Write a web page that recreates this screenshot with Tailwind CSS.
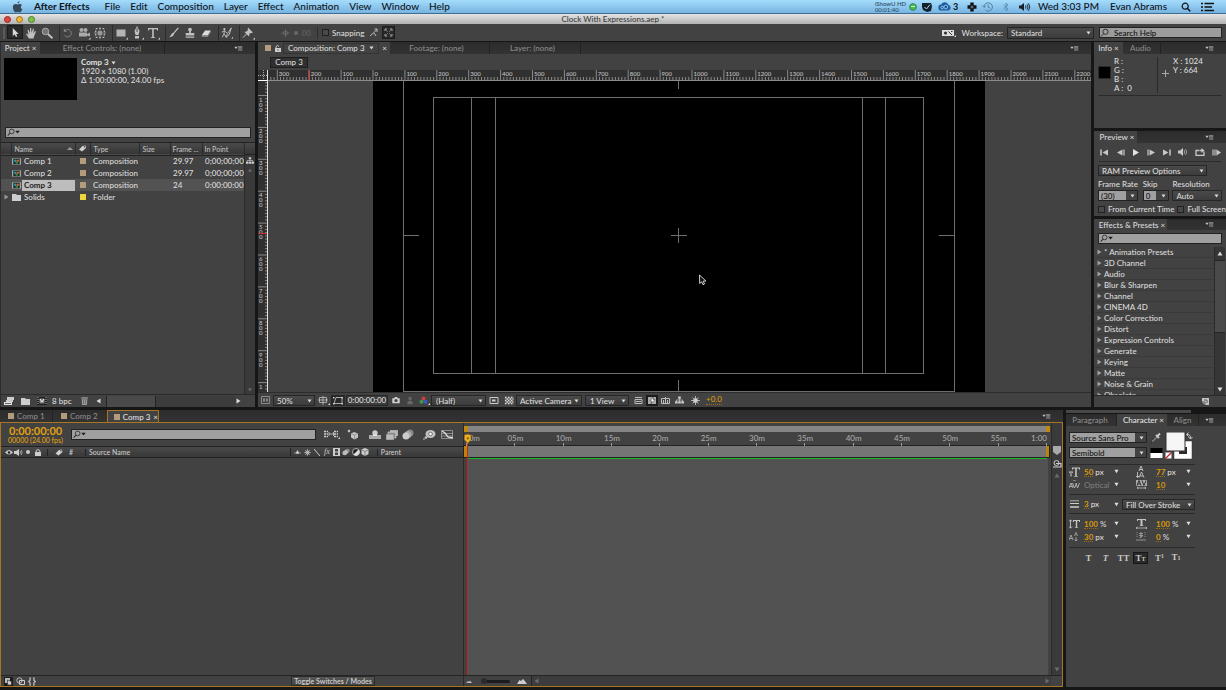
<!DOCTYPE html>
<html lang="en">
<head>
    <meta charset="UTF-8">
    <meta name="viewport" content="width=device-width, initial-scale=1.0">
    <title>After Effects - Clock With Expressions.aep</title>
    <script src="https://cdn.jsdelivr.net/npm/@tailwindcss/browser@4"></script>
</head>
<body class="h-screen flex flex-col overflow-hidden bg-[#161616] font-['Lato','Open_Sans',sans-serif] text-[8px] leading-[10px] text-[#dcdcdc] font-medium">

    <!-- shared icons -->
    <svg class="hidden">
        <symbol id="panelMenu" viewBox="0 0 10 6"><path d="M0 1h4l-2 2.500z" fill="#c4c4c4"/><path d="M4.500 .5h5M4.500 2h5M4.500 3.500h5M4.500 5h5" stroke="#b0b0b0" stroke-width=".8"/></symbol>
        <symbol id="down" viewBox="0 0 6 5"><path d="M.5.5h5L3 4.500z" fill="currentColor"/></symbol>
        <symbol id="right" viewBox="0 0 5 6"><path d="M.5.500v5L4.500 3z" fill="currentColor"/></symbol>
        <symbol id="lens" viewBox="0 0 16 10"><circle cx="6" cy="3.800" r="2.600" fill="none" stroke="#333"/><path d="M4.200 5.700 1.500 8.500" stroke="#333" stroke-width="1.200"/><path d="M10 3h5l-2.500 3z" fill="#1c1c1c"/></symbol>
        <symbol id="compIcon" viewBox="0 0 10 7"><path d="M0 0h10v7H0z" fill="#a4a4a4"/><path d="M1.500.5h7v6h-7z" fill="#162424"/><circle cx="3.700" cy="2.700" r="1.500" fill="#2a9aa0"/><circle cx="6.500" cy="2.800" r="1.400" fill="#c5612b"/><path d="M4 4h2.500v2H4z" fill="#3c8f3c"/></symbol>
        <symbol id="tag" viewBox="0 0 10 8"><path d="M1 5 5 1.200 8.500.5 9 3.500 4.500 7.500z" fill="#d0d0d0"/><circle cx="7.300" cy="2" r=".8" fill="#333"/></symbol>
        <symbol id="flow" viewBox="0 0 10 8"><path d="M3.500 0h3v2.500h-3zM0 5.500h3V8H0zM3.500 5.500h3V8h-3zM7 5.500h3V8H7z" fill="#ccc"/><path d="M5 2v4M1.500 6V4h7v2" fill="none" stroke="#ccc" stroke-width=".8"/></symbol>
        <symbol id="dot" viewBox="0 0 4 4"><circle cx="2" cy="2" r="2" fill="currentColor"/></symbol>
    </svg>

    <!-- system menu bar -->
    <nav class="h-[14px] shrink-0 flex items-center bg-linear-to-b from-[#a4dcfb] to-[#78b4e2] border-b border-[#3f6d92] text-[10px] leading-[13px] text-[#101418]">
        <svg class="ml-[12px] w-[11px] h-[12px]" viewBox="0 0 11 12"><path d="M7.600.3c.1 1.200-.9 2.300-2.100 2.300C5.400 1.500 6.400.400 7.600.300zM9.900 8.900c-.6 1.400-1.300 2.500-2.300 2.500-.7 0-1-.4-1.900-.4s-1.200.4-1.900.4C2.500 11.400.9 8.700.9 6.300.900 4.100 2.300 3 3.700 3c.9 0 1.500.5 2.100.5.600 0 1.300-.6 2.300-.6.8 0 1.500.4 1.900 1.100-1.800 1-1.500 3.800.6 4.400z" fill="#36495a"/></svg>
        <div class="ml-[11px] flex gap-[10px]">
            <a href="#" class="font-bold mr-[5px]">After Effects</a>
            <a href="#">File</a>
            <a href="#">Edit</a>
            <a href="#">Composition</a>
            <a href="#">Layer</a>
            <a href="#">Effect</a>
            <a href="#">Animation</a>
            <a href="#">View</a>
            <a href="#">Window</a>
            <a href="#">Help</a>
        </div>
        <div class="ml-auto mr-[12px] flex items-center">
            <div class="w-[34px] text-[6px] leading-[6px] whitespace-nowrap text-[#2c4a63]">iShowU HD<br>00:01:40</div>
            <svg class="w-[8px] h-[8px]" viewBox="0 0 8 8"><circle cx="4" cy="4" r="3.300" fill="#3fc34a" stroke="#3a7a58"/><path d="M2 3h4v1H2z" fill="#c8f5c8"/></svg>
            <svg class="ml-[4px] w-[12px] h-[10px]" viewBox="0 0 12 10"><path d="M1 1h9l1 3-1 5-4 1-4-2-1-3z" fill="#15202a"/><path d="m3.500 5 2 2L9 2.500" stroke="#a8d4f2" fill="none"/></svg>
            <svg class="ml-[5px] w-[13px] h-[9px]" viewBox="0 0 13 9"><path d="M3.500 8.500a3 3 0 0 1-.3-6A4 4 0 0 1 10.500 3a2.800 2.800 0 0 1-.5 5.500z" fill="#1f5d9e"/><circle cx="4.200" cy="5.500" r="1.300" stroke="#a9d7f7" stroke-width=".8" fill="none"/><circle cx="7.800" cy="5" r="1.900" stroke="#a9d7f7" stroke-width=".8" fill="none"/></svg>
            <span class="ml-[2px] w-[14px] text-[9px] font-bold">3</span>
            <svg class="w-[10px] h-[10px]" viewBox="0 0 10 10"><path d="M3.300.5h3.400v2.800h2.800v3.400H6.700v2.800H3.300V6.700H.5V3.300h2.800z" fill="#111"/><path d="M5 3.500v3M3.500 5h3" stroke="#7fb5e0" stroke-width=".7"/></svg>
            <svg class="ml-[5px] w-[12px] h-[10px]" viewBox="0 0 12 10"><path d="M2 5a4.200 4.200 0 1 1 1.500 3.200M.5 3.500 2 5.500l1.800-1.500M6.200 2.500V5.200l2 1" fill="none" stroke="#56809f"/></svg>
            <svg class="ml-[8px] w-[8px] h-[10px]" viewBox="0 0 8 10"><path d="m1.500 3 4.500 4-2 2V1l2 2-4.500 4" fill="none" stroke="#5a88ac" stroke-width=".8"/></svg>
            <svg class="ml-[8px] w-[13px] h-[10px]" viewBox="0 0 13 10"><path d="M1 3.500h2L6 1v8L3 6.500H1z" fill="#15202a"/><path d="M7.500 3.500q1 1.500 0 3M9 2.300q2 2.700 0 5.400M10.500 1.200q2.500 3.800 0 7.600" fill="none" stroke="#15202a" stroke-width=".9"/></svg>
            <span class="ml-[7px] whitespace-nowrap">Wed 3:03 PM</span>
            <span class="ml-[11px] whitespace-nowrap">Evan Abrams</span>
            <svg class="ml-[14px] w-[10px] h-[10px]" viewBox="0 0 10 10"><circle cx="4.200" cy="4.200" r="3" fill="none" stroke="#111" stroke-width="1.200"/><path d="m6.300 6.300 2.900 3" stroke="#111" stroke-width="1.500"/></svg>
            <svg class="ml-[10px] w-[13px] h-[10px]" viewBox="0 0 13 10"><path d="M3.500 1.500H13M3.500 5H11M3.500 8.500H13" stroke="#111" stroke-width="1.600"/><path d="M0 1.500h2M0 5h2M0 8.500h2" stroke="#111" stroke-width="1.600"/></svg>
        </div>
    </nav>

    <!-- window title -->
    <header class="h-[10px] shrink-0 grid grid-cols-3 items-center bg-linear-to-b from-[#e4e4e4] to-[#b4b4b4] text-[#3c3c3c]">
        <div class="pl-[4px] flex gap-[5px]">
            <button aria-label="Close" class="size-[7px] rounded-full bg-[#e0443a] border border-[#8d2d27]"></button>
            <button aria-label="Minimise" class="size-[7px] rounded-full bg-[#f0b33c] border border-[#9a7324]"></button>
            <button aria-label="Zoom" class="size-[7px] rounded-full bg-[#7fbf4d] border border-[#4e7c2d]"></button>
        </div>
        <h1 class="text-center">Clock With Expressions.aep *</h1>
    </header>

    <!-- tool bar -->
    <div class="h-[17px] shrink-0 flex items-center bg-[#424242]">
        <div class="ml-[3px] w-[2px] h-[12px] bg-[#5a5a5a]"></div>
        <div class="ml-[2px] flex items-center gap-[4px] text-[#c0c0c0]">
            <div class="flex">
                <button aria-label="Selection" class="w-[16px] h-[14px] p-px flex justify-center bg-[#2a2a2a] border border-[#1c1c1c]"><svg class="size-[11px]" viewBox="0 0 12 12"><path d="M3 1v9l2-2 1.500 3 1.500-.8L6.600 7.500H9.500z" fill="#d8d8d8"/></svg></button>
                <button aria-label="Hand" class="size-[16px] p-[2px]"><svg viewBox="0 0 12 12"><path d="M4 11.500 1 7l1-.5L3.500 8 2.500 3l1-.3L5 6V1h1.200l.3 5L8 1.500l1 .3L8.300 6.500 10 4l1 .5-2 5-.5 2z" fill="currentColor"/></svg></button>
                <button aria-label="Zoom tool" class="size-[16px] p-[2px]"><svg viewBox="0 0 12 12"><circle cx="4.500" cy="4.500" r="3.300" fill="#777" stroke="#a8a8a8"/><path d="m7 7 4.500 4.300" stroke="currentColor" stroke-width="2"/></svg></button>
            </div>
            <div class="flex border-l border-[#2c2c2c]">
                <button aria-label="Rotate" class="size-[16px] p-[3px]"><svg viewBox="0 0 12 12"><path d="M3 2.500A4.500 4.500 0 1 1 2 9" fill="none" stroke="#8a8a8a"/><path d="M1 .5v4h4z" fill="#8a8a8a"/></svg></button>
                <button aria-label="Camera" class="size-[16px] p-[1px]"><svg viewBox="0 0 14 14"><circle cx="4.500" cy="4" r="2" fill="#aaa"/><circle cx="8.500" cy="4" r="2" fill="#aaa"/><path d="M2 6.500h8v4H2zM10 8l3-1.500v4L10 9.500z" fill="#aaa"/><path d="M11.500 13.500h2v-2z" fill="#ddd"/></svg></button>
                <button aria-label="Pan behind" class="size-[16px] p-[2px]"><svg viewBox="0 0 14 14"><circle cx="7" cy="7" r="3" fill="#999"/><path d="M2 2h10v10H2z" fill="none" stroke="#c0c0c0" stroke-width="1.500" stroke-dasharray="2 2"/><path d="M7 0v3M7 11v3M0 7h3M11 7h3" stroke="#999"/></svg></button>
            </div>
            <div class="flex border-l border-[#2c2c2c]">
                <button aria-label="Rectangle" class="size-[16px] p-[1px]"><svg viewBox="0 0 14 14"><path d="M2.500 3.500h9v7h-9z" fill="#b4b4b4"/><path d="M12 13.500h2v-2z" fill="#ddd"/></svg></button>
                <button aria-label="Pen" class="size-[16px] p-[1px]"><svg viewBox="0 0 14 14"><path d="M7 0 9.500 5 8.500 9h-3L4.500 5z" fill="currentColor"/><path d="M5 10h4v2.500H5z" fill="currentColor"/><path d="M7 2v4" stroke="#333" stroke-width=".8"/><path d="M12 13.500h2v-2z" fill="#ddd"/></svg></button>
                <button aria-label="Type" class="size-[16px] p-[1px]"><svg viewBox="0 0 14 14"><path d="M2 2h10v2.500h-.8l-.6-1.300H7.800V11l1.400.5v.6H4.800v-.6L6.200 11V3.200H3.400l-.6 1.300H2z" fill="currentColor"/><path d="M12 13.500h2v-2z" fill="#ddd"/></svg></button>
            </div>
            <div class="flex border-l border-[#2c2c2c]">
                <button aria-label="Brush" class="size-[16px] p-[2px]"><svg viewBox="0 0 14 14"><path d="M12 1 6 8" stroke="currentColor" stroke-width="1.600"/><path d="M6.500 7.500 5 7 3 10l-1.500 2L5 11l2-2z" fill="currentColor"/></svg></button>
                <button aria-label="Clone stamp" class="size-[16px] p-[2px]"><svg viewBox="0 0 14 14"><circle cx="7" cy="3" r="2.200" fill="currentColor"/><path d="M6 4h2v3h4v3H2V7h4zM2 11h10v1.500H2z" fill="currentColor"/></svg></button>
                <button aria-label="Eraser" class="size-[16px] p-[2px]"><svg viewBox="0 0 14 14"><path d="M6 4h6.500L9 9.500H2z" fill="#ddd"/><path d="M2 9.500h7v2H2zM9 9.500 12.500 4v2L9 11.500z" fill="#999"/></svg></button>
            </div>
            <div class="flex border-l border-[#2c2c2c]">
                <button aria-label="Roto brush" class="size-[16px] p-[2px]"><svg viewBox="0 0 14 14"><circle cx="4" cy="2.500" r="1.300" fill="currentColor"/><path d="m4 4-.5 4L1.500 12M3.800 8 6 12M1 6l3-1.500L7 7M12 1 7.500 8 6 12l3.500-3z" stroke="currentColor" fill="none" stroke-width="1.100"/><path d="M12 13.500h2v-2z" fill="#ddd"/></svg></button>
            </div>
            <div class="flex border-l border-[#2c2c2c]">
                <button aria-label="Puppet pin" class="size-[16px] p-[1px]"><svg viewBox="0 0 14 14"><path d="m7 1.500 5 5-1.500.5-2 .5-.5 3L3.500 6 6.500 5z" fill="currentColor"/><path d="M5.500 8 2 11.500" stroke="currentColor"/><path d="M12 13.500h2v-2z" fill="#ddd"/></svg></button>
            </div>
        </div>
        <div class="ml-[25px] flex items-center gap-[2px] text-[#686868]">
            <svg class="w-[9px] h-[8px]" viewBox="0 0 9 8"><path d="M4.500 0v8M.5 4h8" stroke="currentColor"/><path d="M2.500 2.500h4v3h-4z" fill="none" stroke="currentColor" stroke-width=".7"/></svg>
            <svg class="w-[8px] h-[8px]" viewBox="0 0 8 8"><circle cx="4" cy="4" r="2" fill="currentColor"/></svg>
            <svg class="w-[9px] h-[8px]" viewBox="0 0 9 8"><path d="M1 1v6M8 1v6M2.500 1l4 6M6.500 1l-4 6" stroke="currentColor" stroke-width=".8"/></svg>
            <span class="mx-[4px] w-px h-[12px] bg-[#2c2c2c]"></span>
        </div>
        <label class="flex items-center gap-[3px]">
            <input type="checkbox" class="appearance-none size-[7px] bg-[#484848] border border-[#202020]">
            Snapping
        </label>
        <svg class="ml-[5px] w-[9px] h-[9px]" viewBox="0 0 9 9"><path d="m1 8 4-3.500L8 1M5.500 1H8v3" fill="none" stroke="#bbb"/><path d="m5 5 2 3" stroke="#bbb"/></svg>
        <button aria-label="Snap bounds" class="ml-[4px] size-[13px] p-[1px] bg-[#2a2a2a] border border-[#1c1c1c]"><svg viewBox="0 0 9 9"><path d="M1 3V1h2M6 1h2v2M8 6v2H6M3 8H1V6M2.500 2.500l1 1M6.500 2.500l-1 1M2.500 6.500l1-1M6.500 6.500l-1-1" fill="none" stroke="#c4c4c4" stroke-width=".8"/></svg></button>

        <svg class="ml-auto w-[14px] h-[8px]" viewBox="0 0 14 8"><path d="M0 1h12v6H0z" fill="#ddd"/><circle cx="3.500" cy="4" r="1.600" fill="#333"/><path d="M6.500 2.500 10 6M9 2.500h1.500" stroke="#333"/><path d="M12 8h2V6z" fill="#ddd"/></svg>
        <label for="workspace" class="ml-[6px]">Workspace:</label>
        <div class="relative ml-[4px] w-[87px] h-[12px]">
            <select id="workspace" class="appearance-none block size-full pl-[3px] bg-linear-to-b from-[#4a4a4a] to-[#3c3c3c] border border-[#242424]"><option>Standard</option></select>
            <svg class="absolute right-[3px] top-[4px] w-[5px] h-[4px]"><use href="#down"/></svg>
        </div>
        <div class="relative ml-[5px] mr-[4px] w-[123px] h-[11px]">
            <input type="text" aria-label="Search help" value="Search Help" class="block size-full pl-[14px] bg-[#9c9c9c] border border-[#222] text-[#111]">
            <svg class="absolute left-px top-[1px] w-[9px] h-[10px]" viewBox="0 0 9 10"><circle cx="5.500" cy="3.800" r="2.600" fill="none" stroke="#333"/><path d="M3.700 5.700 1 8.500" stroke="#333"/></svg>
        </div>
    </div>

    <main class="flex-1 min-h-0 grid grid-rows-[365fr_277fr] gap-y-[3px] pt-px pb-[3px]">
        <div class="min-h-0 flex gap-[3px]">

            <!-- project panel -->
            <section class="w-[255px] shrink-0 flex flex-col bg-[#424242] border-l border-[#2c2c2c]">
                <div class="h-[12px] shrink-0 flex items-center bg-linear-to-b from-[#2c2c2c] to-[#333]">
                    <button class="h-full w-[39px] bg-[#424242]">Project ×</button>
                    <button class="h-full w-[125px] border-r border-[#222] text-[#8a8a8a]">Effect Controls: (none)</button>
                    <svg class="ml-auto mr-[12px] w-[9px] h-[5px]"><use href="#panelMenu"/></svg>
                </div>
                <div class="flex pt-[4px] pl-[3px] gap-[4px]">
                    <div class="w-[73px] h-[42px] bg-black"></div>
                    <div class="leading-[9px]">
                        <p class="flex items-center gap-[2px] font-bold text-[#e0e0e0]">Comp 3 <svg class="w-[5px] h-[4px]"><use href="#down"/></svg></p>
                        <p>1920 x 1080 (1.00)</p>
                        <p>Δ 1:00:00:00, 24.00 fps</p>
                    </div>
                </div>
                <div class="relative mt-[27px] mx-[4px] h-[11px]">
                    <input type="text" aria-label="Search project" class="block size-full pl-[16px] bg-[#a0a0a0] border border-[#222]">
                    <svg class="absolute left-[1px] top-[1px] w-[15px] h-[9px]"><use href="#lens"/></svg>
                </div>
                <div class="mt-[4px] flex-1 min-h-0 flex border-t border-[#222]">
                    <div class="flex-1 min-w-0 overflow-hidden">
                        <table class="w-full table-fixed border-collapse text-left whitespace-nowrap">
                            <colgroup><col class="w-[10px]"><col class="w-[64px]"><col class="w-[15px]"><col class="w-[49px]"><col class="w-[31px]"><col class="w-[32px]"><col></colgroup>
                            <thead>
                                <tr class="h-[12px] bg-linear-to-b from-[#4a4a4a] to-[#363636] border-b border-[#222] text-[7px] text-[#c0c0c0]">
                                    <th></th>
                                    <th class="font-medium border-l border-[#2a2a2a]"><span class="flex items-center justify-between pl-[3px] pr-[2px]">Name <svg class="w-[6px] h-[3px]" viewBox="0 0 6 3"><path d="M0 3h6L3 0z" fill="#999"/></svg></span></th>
                                    <th class="border-l border-[#2a2a2a]"><svg class="mx-auto w-[9px] h-[7px]"><use href="#tag"/></svg></th>
                                    <th class="font-medium pl-[3px] border-l border-[#2a2a2a]">Type</th>
                                    <th class="font-medium pl-[3px] border-l border-[#2a2a2a]">Size</th>
                                    <th class="font-medium pl-[2px] border-l border-[#2a2a2a]">Frame ...</th>
                                    <th class="font-medium pl-[2px] border-l border-[#2a2a2a]">In Point</th>
                                </tr>
                            </thead>
                            <tbody>
                                <tr class="h-[12px]">
                                    <td></td><td><span class="flex items-center gap-[3px] pl-px"><svg class="w-[9px] h-[7px]"><use href="#compIcon"/></svg>Comp 1</span></td>
                                    <td><div class="mx-auto size-[6px] bg-[#b39c7c]"></div></td><td class="pl-[3px]">Composition</td><td></td><td class="pl-[3px]">29.97</td><td class="pl-[3px]">0;00;00;00</td>
                                </tr>
                                <tr class="h-[12px]">
                                    <td></td><td><span class="flex items-center gap-[3px] pl-px"><svg class="w-[9px] h-[7px]"><use href="#compIcon"/></svg>Comp 2</span></td>
                                    <td><div class="mx-auto size-[6px] bg-[#b39c7c]"></div></td><td class="pl-[3px]">Composition</td><td></td><td class="pl-[3px]">29.97</td><td class="pl-[3px]">0;00;00;00</td>
                                </tr>
                                <tr class="h-[12px] bg-[#525252]">
                                    <td></td><td><span class="flex items-center gap-px pl-px"><svg class="w-[9px] h-[7px]"><use href="#compIcon"/></svg><span class="flex-1 h-[11px] pl-[2px] bg-[#bdbdbd] text-[#222] font-bold">Comp 3</span></span></td>
                                    <td><div class="mx-auto size-[6px] bg-[#b39c7c]"></div></td><td class="pl-[3px]">Composition</td><td></td><td class="pl-[3px]">24</td><td class="pl-[3px]">0:00:00:00</td>
                                </tr>
                                <tr class="h-[12px]">
                                    <td><svg class="ml-[3px] w-[5px] h-[6px] text-[#999]"><use href="#right"/></svg></td><td><span class="flex items-center gap-[3px] pl-px"><svg class="w-[9px] h-[7px]" viewBox="0 0 9 7"><path d="M0 0h4l1 1h4v6H0z" fill="#ccc"/></svg>Solids</span></td>
                                    <td><div class="mx-auto size-[6px] bg-[#ecd43c]"></div></td><td class="pl-[3px]">Folder</td><td></td><td></td><td></td>
                                </tr>
                            </tbody>
                        </table>
                    </div>
                    <div class="w-[11px] flex flex-col items-center bg-[#3a3a3a] border-l border-[#2a2a2a] text-[#6c6c6c]">
                        <div class="w-full h-[12px] bg-linear-to-b from-[#4a4a4a] to-[#363636] border-b border-[#222]"></div>
                        <svg class="my-[2px] w-[8px] h-[7px]"><use href="#flow"/></svg>
                        <svg class="mt-[2px] w-[6px] h-[4px] rotate-180"><use href="#down"/></svg>
                        <svg class="mt-auto mb-[2px] w-[6px] h-[4px]"><use href="#down"/></svg>
                    </div>
                </div>
                <div class="h-[13px] shrink-0 flex items-center pl-[3px] border-t border-[#2a2a2a]">
                    <svg class="w-[10px] h-[9px]" viewBox="0 0 10 9"><path d="M3 0h7v3H3zM2 3h7v2H2z" fill="#ccc"/><path d="M0 5h8v3H0z" fill="#e0e0e0"/><path d="M1 6.500h6" stroke="#333" stroke-width=".7"/></svg>
                    <svg class="ml-[7px] w-[9px] h-[7px]" viewBox="0 0 9 7"><path d="M0 0h4l1 1h4v6H0z" fill="#ccc"/></svg>
                    <svg class="ml-[7px] w-[10px] h-[8px]" viewBox="0 0 10 8"><path d="M0 0h10v8H0z" fill="#1e1e1e"/><path d="M1 0v8M9 0v8" stroke="#bbb" stroke-dasharray="1 1"/><path d="M2.500 1.500h5v5h-5z" fill="#888"/><path d="m3 2 2 3 2-3" stroke="#eee" fill="none"/></svg>
                    <button class="ml-[5px]">8 bpc</button>
                    <svg class="ml-[10px] w-[7px] h-[8px]" viewBox="0 0 7 8"><path d="M0 1h7M2.500 0h2" stroke="#aaa"/><path d="M.7 2.200h5.600L6 8H1z" fill="#9a9a9a"/><path d="M2.500 3v4M4.500 3v4" stroke="#555" stroke-width=".6"/></svg>
                    <svg class="ml-[8px] w-[5px] h-[6px] rotate-180"><use href="#right"/></svg>
                    <div class="ml-[5px] w-[50px] h-[11px] bg-[#4a4a4a] border-x border-[#242424]"></div>
                    <div class="flex-1 h-[11px] bg-[#3c3c3c]"></div>
                    <svg class="mr-[14px] w-[5px] h-[6px]"><use href="#right"/></svg>
                </div>
            </section>

            <!-- composition viewer -->
            <section class="flex-1 min-w-0 flex flex-col bg-[#424242]">
                <div class="h-[12px] shrink-0 flex items-center bg-linear-to-b from-[#2c2c2c] to-[#333]">
                    <div class="h-full w-[132px] flex items-center pl-[7px] bg-[#424242]">
                        <span class="size-[6px] bg-[#b39c7c]"></span>
                        <svg class="ml-[4px] w-[6px] h-[7px]" viewBox="0 0 6 7"><path d="M0 3h6v4H0z" fill="#ccc"/><path d="M1 3V1.500Q2.500-.5 4 1.500" fill="none" stroke="#ccc"/><path d="M3 4.500v1" stroke="#333"/></svg>
                        <button class="ml-[2px] h-[11px] flex-1 px-[4px] flex items-center justify-between border border-[#333] whitespace-nowrap">Composition: Comp 3 <svg class="w-[5px] h-[4px]"><use href="#down"/></svg></button>
                        <span class="mx-[3px]">×</span>
                    </div>
                    <button class="h-full w-[100px] pr-[6px] border-r border-[#222] text-[#8a8a8a]">Footage: (none)</button>
                    <button class="h-full w-[91px] pr-[5px] border-r border-[#222] text-[#8a8a8a]">Layer: (none)</button>
                    <svg class="ml-auto mr-[12px] w-[9px] h-[5px]"><use href="#panelMenu"/></svg>
                </div>
                <div class="h-[16px] shrink-0 flex items-center pl-[12px]">
                    <button class="w-[38px] h-[11px] leading-[9px] bg-[#303030] border border-[#1e1e1e]">Comp 3</button>
                </div>
                <!-- 50% view, 100 px of the comp = 31.9 px -->
                <svg id="viewer" class="flex-1 min-h-0 w-full bg-[#424242]" font-size="6" fill="#c4c4c4">
                    <rect width="100%" height="10" fill="#303030"/>
                    <rect width="10" height="100%" fill="#303030"/>
                    <path d="M115 11h612v400H115z" fill="#000"/>
                    <g fill="none" stroke="#6e6e6e" shape-rendering="crispEdges">
                        <path d="M145.500 11v310.500h551V11"/>
                        <path d="M175.500 27.500h490v276h-490zM213.500 27v276M237.500 27v276M604.500 27v276M627.500 27v276"/>
                        <path d="M146 165.500h15M696 165.500h-15M420.500 11v8M420.500 321v-11M413 165.500h16M420.500 158v15"/>
                    </g>
                    <g id="ruler"></g>
                    <path d="M50.500 0v10M0 163.500h9" stroke="#d03030"/>
                    <path d="M0 0h10v10H0z" fill="#303030"/>
                    <path d="M5.500 0v10M0 5.500h10" stroke="#aaa" stroke-dasharray="1 1"/>
                    <line y1="10.500" x2="100%" y2="10.500" stroke="#8c8c8c"/>
                    <line y1="10.500" x2="10" y2="10.500" stroke="#fff"/>
                    <line x1="9.500" x2="9.500" y2="100%" stroke="#e4e4e4"/>
                    <path d="m441.500 205 .2 8.500 2-1.700 1.300 2.900 1.500-.7-1.300-2.800 2.700-.2z" fill="#111" stroke="#fff" stroke-width=".8"/>
                </svg>
                <div class="h-[15px] shrink-0 flex items-center gap-px pl-px border-t border-[#2c2c2c]">
                    <svg class="w-[13px] h-[9px]" viewBox="0 0 13 9"><path d="M2.500.5h8v7h-8z" fill="none" stroke="#888"/><path d="M4 2.500h2v3H4zM7 2.500h2v3H7z" fill="#888"/></svg>
                    <div class="relative w-[42px] h-[11px]">
                        <select aria-label="Zoom" class="appearance-none block size-full pl-[3px] bg-linear-to-b from-[#4a4a4a] to-[#3c3c3c] border border-[#262626]"><option>50%</option></select>
                        <svg class="absolute right-[3px] top-[4px] w-[5px] h-[4px]"><use href="#down"/></svg>
                    </div>
                    <svg class="w-[14px] h-[9px]" viewBox="0 0 14 9"><path d="M3.500 1.500h7v5h-7zM7 0v9M2 4h10" fill="none" stroke="#c4c4c4" stroke-width=".8"/><path d="M12 9h2V7z" fill="#ddd"/></svg>
                    <svg class="w-[14px] h-[11px] bg-[#282828]" viewBox="0 0 14 11"><path d="M3 8.500h8v-6H5z" fill="none" stroke="#ccc" stroke-width=".8"/><path d="M2 2h1.500v1.500H2zM10.500 8H12v1.500h-1.500zM2 8h1.500v1.500H2zM10.500 2H12v1.500h-1.500z" fill="#ccc"/></svg>
                    <button class="w-[42px] h-[11px] leading-[9px] bg-[#3c3c3c] border border-[#262626]">0:00:00:00</button>
                    <svg class="w-[14px] h-[9px]" viewBox="0 0 15 9"><path d="M3.500 2h2l1-1.200h2l1 1.200h2v5.500h-8z" fill="#ccc"/><circle cx="7.500" cy="4.500" r="1.700" fill="#444"/></svg>
                    <svg class="w-[12px] h-[9px]" viewBox="0 0 13 9"><circle cx="6.500" cy="2.200" r="1.800" fill="#686868"/><path d="M3.500 8.500q0-4 3-4t3 4z" fill="#686868"/></svg>
                    <svg class="w-[13px] h-[9px]" viewBox="0 0 13 9"><circle cx="6.500" cy="2.500" r="2" fill="#d03c3c"/><circle cx="4.500" cy="5.800" r="2" fill="#3b9a45"/><circle cx="8.500" cy="5.800" r="2" fill="#3a58c8"/><path d="M11 9h2V7z" fill="#ddd"/></svg>
                    <div class="relative w-[55px] h-[11px]">
                        <select aria-label="Resolution" class="appearance-none block size-full pl-[4px] bg-linear-to-b from-[#4a4a4a] to-[#3c3c3c] border border-[#262626]"><option>(Half)</option></select>
                        <svg class="absolute right-[3px] top-[4px] w-[5px] h-[4px]"><use href="#down"/></svg>
                    </div>
                    <svg class="w-[14px] h-[9px]" viewBox="0 0 14 9"><path d="M3 1.500h8v6H3z" fill="none" stroke="#ccc"/><path d="M5 3.500h3.500v2H5z" fill="#ccc"/></svg>
                    <svg class="w-[13px] h-[9px]" viewBox="0 0 13 9"><path d="M2.500.5h9v8h-9z" fill="#555"/><path d="M3 1.500h8M3 4.500h8M3 7.500h8" stroke="#ddd" stroke-width="1.500" stroke-dasharray="1.500 1.500"/><path d="M4.500 3h7M4.500 6h7" stroke="#ddd" stroke-width="1.500" stroke-dasharray="1.500 1.500"/></svg>
                    <div class="relative w-[66px] h-[11px]">
                        <select aria-label="Camera" class="appearance-none block size-full pl-[3px] bg-linear-to-b from-[#4a4a4a] to-[#3c3c3c] border border-[#262626]"><option>Active Camera</option></select>
                        <svg class="absolute right-[3px] top-[4px] w-[5px] h-[4px]"><use href="#down"/></svg>
                    </div>
                    <div class="relative ml-[2px] w-[44px] h-[11px]">
                        <select aria-label="Views" class="appearance-none block size-full pl-[4px] bg-linear-to-b from-[#4a4a4a] to-[#3c3c3c] border border-[#262626]"><option>1 View</option></select>
                        <svg class="absolute right-[3px] top-[4px] w-[5px] h-[4px]"><use href="#down"/></svg>
                    </div>
                    <svg class="ml-[2px] w-[13px] h-[9px]" viewBox="0 0 13 9"><path d="M3 1.500h7M3 3.500h7v4H3z" fill="none" stroke="#bbb"/><path d="M4 5h5v1H4z" fill="#bbb"/></svg>
                    <svg class="w-[12px] h-[11px] bg-[#1c1c1c]" viewBox="0 0 12 11"><path d="M2 2h8v7H2z" fill="#aaa"/><path d="m7 2-3 4h2l-1 3 4-4.500H7z" fill="#fff" stroke="#333" stroke-width=".5"/></svg>
                    <svg class="w-[13px] h-[9px]" viewBox="0 0 13 9"><path d="M2.500 2.500h8v5h-8z" fill="none" stroke="#bbb"/><path d="M4.500 4v3M6.500 1v6M8.500 4v3" stroke="#bbb"/></svg>
                    <svg class="mx-[2px] w-[9px] h-[8px]"><use href="#flow"/></svg>
                    <svg class="ml-[3px] w-[11px] h-[9px]" viewBox="0 0 11 9"><circle cx="5.500" cy="4.500" r="2.300" fill="#ddd"/><path d="M5.500 0v9M1 4.500h9M2.500 1.500l6 6M8.500 1.500l-6 6" stroke="#ccc" stroke-width=".8"/></svg>
                    <button class="ml-[4px] text-[#d8980c] border-b border-dotted border-[#a06c10] leading-[9px]">+0.0</button>
                </div>
            </section>

            <div class="w-[132px] shrink-0 flex flex-col gap-[3px]">
                <!-- info -->
                <section class="h-[86px] shrink-0 bg-[#424242]">
                    <div class="h-[12px] flex items-center bg-linear-to-b from-[#2c2c2c] to-[#333]">
                        <button class="h-full w-[29px] bg-[#424242]">Info ×</button>
                        <button class="h-full w-[38px] pr-[2px] border-r border-[#222] text-[#8a8a8a]">Audio</button>
                        <svg class="ml-auto mr-[12px] w-[9px] h-[5px]"><use href="#panelMenu"/></svg>
                    </div>
                    <div class="mx-[4px] pt-[3px] pb-[2px] flex border-b border-[#2a2a2a] leading-[9px]">
                        <div class="mt-[9px] size-[13px] bg-black border border-[#2a2a2a]"></div>
                        <div class="ml-[3px] w-[44px] border-r border-[#2a2a2a]">
                            <p>R :</p><p>G :</p><p>B :</p><p>A : &nbsp;0</p>
                        </div>
                        <svg class="mt-[13px] ml-[4px] w-[7px] h-[7px]" viewBox="0 0 7 7"><path d="M3.500 0v7M0 3.500h7" stroke="#aaa"/></svg>
                        <div class="ml-[4px]"><p>X : 1024</p><p>Y : 664</p></div>
                    </div>
                </section>

                <!-- preview -->
                <section class="h-[85px] shrink-0 bg-[#424242]">
                    <div class="h-[12px] flex items-center bg-linear-to-b from-[#2c2c2c] to-[#333]">
                        <button class="h-full w-[43px] pl-[3px] bg-[#424242]">Preview ×</button>
                        <svg class="ml-auto mr-[12px] w-[9px] h-[5px]"><use href="#panelMenu"/></svg>
                    </div>
                    <div class="mx-[5px] h-[19px] flex items-center justify-between pl-px border-b border-[#2c2c2c] text-[#c8c8c8]">
                        <button aria-label="First frame"><svg class="w-[9px] h-[7px]" viewBox="0 0 9 7"><path d="M1 .5v6" stroke="currentColor" stroke-width="1.500"/><path d="M8 .5v6L2.500 3.500z" fill="currentColor"/></svg></button>
                        <button aria-label="Previous frame"><svg class="w-[9px] h-[7px]" viewBox="0 0 9 7"><path d="M8 .5v6" stroke="currentColor" stroke-width="1.200"/><path d="M6.500.5v6L1 3.500z" fill="currentColor"/></svg></button>
                        <button aria-label="Play"><svg class="w-[8px] h-[7px]" viewBox="0 0 8 7"><path d="M1 0v7l6-3.500z" fill="#e0e0e0"/></svg></button>
                        <button aria-label="Next frame"><svg class="w-[9px] h-[7px]" viewBox="0 0 9 7"><path d="M1 .5v6" stroke="currentColor" stroke-width="1.200"/><path d="M2.500.5v6L8 3.500z" fill="currentColor"/></svg></button>
                        <button aria-label="Last frame"><svg class="w-[9px] h-[7px]" viewBox="0 0 9 7"><path d="M8 .5v6" stroke="currentColor" stroke-width="1.500"/><path d="M1 .5v6l5.500-3z" fill="currentColor"/></svg></button>
                        <button aria-label="Mute"><svg class="w-[10px] h-[8px]" viewBox="0 0 10 8"><path d="M0 2.500h2L5 0v8L2 5.500H0z" fill="currentColor"/><path d="M6 2q1.500 2 0 4M7.500 1q2.500 3 0 6" fill="none" stroke="#999"/></svg></button>
                        <button aria-label="Loop"><svg class="w-[10px] h-[8px]" viewBox="0 0 10 8"><path d="M4 2.500H1v5h8v-4M4.500 2.500H7" fill="none" stroke="currentColor" stroke-width="1.300"/><path d="M6.500 0v5l3-2.500z" fill="currentColor"/></svg></button>
                        <button aria-label="RAM preview"><svg class="w-[9px] h-[7px]" viewBox="0 0 9 7"><path d="M0 .5h4.500v6H0z" fill="#8c8c8c"/><path d="M4.500.5v6L9 3.500z" fill="currentColor"/></svg></button>
                    </div>
                    <div class="relative mt-[3px] ml-[4px] w-[109px] h-[11px]">
                        <select aria-label="Preview options" class="appearance-none block size-full pl-[3px] bg-linear-to-b from-[#4a4a4a] to-[#3c3c3c] border border-[#262626]"><option>RAM Preview Options</option></select>
                        <svg class="absolute right-[3px] top-[4px] w-[5px] h-[4px]"><use href="#down"/></svg>
                    </div>
                    <div class="mt-[4px] mx-[4px] flex">
                        <div class="w-[45px]">
                            <label for="frameRate" class="block leading-[9px] whitespace-nowrap">Frame Rate</label>
                            <div class="relative mt-px w-[40px] h-[11px]">
                                <select id="frameRate" class="appearance-none block size-full pl-[2px] bg-linear-to-r from-[#a0a0a0] from-70% to-[#424242] to-70% border border-[#222] text-[#111]"><option>(30)</option></select>
                                <svg class="absolute right-[3px] top-[4px] w-[5px] h-[4px]"><use href="#down"/></svg>
                            </div>
                        </div>
                        <div class="w-[30px]">
                            <label for="skip" class="block leading-[9px]">Skip</label>
                            <div class="relative mt-px w-[26px] h-[11px]">
                                <select id="skip" class="appearance-none block size-full pl-[2px] bg-linear-to-r from-[#a0a0a0] from-50% to-[#424242] to-50% border border-[#222] text-[#111]"><option>0</option></select>
                                <svg class="absolute right-[3px] top-[4px] w-[5px] h-[4px]"><use href="#down"/></svg>
                            </div>
                        </div>
                        <div class="w-[50px]">
                            <label for="previewRes" class="block leading-[9px]">Resolution</label>
                            <div class="relative mt-px h-[11px]">
                                <select id="previewRes" class="appearance-none block size-full pl-[3px] bg-linear-to-b from-[#4a4a4a] to-[#3c3c3c] border border-[#262626]"><option>Auto</option></select>
                                <svg class="absolute right-[3px] top-[4px] w-[5px] h-[4px]"><use href="#down"/></svg>
                            </div>
                        </div>
                    </div>
                    <div class="mt-[3px] pl-[4px] flex items-center gap-[3px] whitespace-nowrap">
                        <label class="flex items-center gap-[3px]"><input type="checkbox" class="appearance-none size-[7px] bg-[#484848] border border-[#202020]">From Current Time</label>
                        <label class="flex items-center gap-[3px]"><input type="checkbox" class="appearance-none size-[7px] bg-[#484848] border border-[#202020]">Full Screen</label>
                    </div>
                </section>

                <!-- effects & presets -->
                <section class="flex-1 min-h-0 flex flex-col bg-[#424242]">
                    <div class="h-[11px] shrink-0 flex items-center bg-linear-to-b from-[#2c2c2c] to-[#333]">
                        <button class="h-full w-[73px] pl-[3px] bg-[#424242]">Effects &amp; Presets ×</button>
                        <svg class="ml-auto mr-[12px] w-[9px] h-[5px]"><use href="#panelMenu"/></svg>
                    </div>
                    <div class="relative mt-[3px] mx-[4px] h-[11px] shrink-0">
                        <input type="text" aria-label="Search effects" class="block size-full pl-[16px] bg-[#a0a0a0] border border-[#222]">
                        <svg class="absolute left-[1px] top-[1px] w-[15px] h-[9px]"><use href="#lens"/></svg>
                    </div>
                    <div class="mt-[3px] flex-1 min-h-0 flex">
                        <ul id="effectList" class="flex-1 overflow-hidden"></ul>
                        <div class="mr-px w-[11px] flex flex-col items-center bg-[#363636] border-l border-[#2a2a2a]">
                            <svg class="my-[4px] w-[6px] h-[5px] rotate-180 shrink-0"><use href="#down"/></svg>
                            <div class="w-full h-[73px] bg-[#4a4a4a] border-y border-[#242424]"></div>
                            <svg class="mt-auto mb-[3px] w-[6px] h-[5px] shrink-0"><use href="#down"/></svg>
                        </div>
                    </div>
                    <div class="h-[12px] shrink-0 flex items-center justify-end pr-[17px] border-t border-[#2a2a2a]">
                        <svg class="w-[7px] h-[7px]" viewBox="0 0 7 7"><path d="M0 0h7v7H3L0 4z" fill="#c4c4c4"/><path d="M0 4h3v3M2 2h3v3" fill="none" stroke="#444" stroke-width=".8"/></svg>
                    </div>
                </section>
            </div>
        </div>

        <div class="min-h-0 flex gap-[3px]">

            <!-- timeline -->
            <section class="flex-1 min-w-0 flex flex-col">
                <div class="h-[12px] shrink-0 flex items-center bg-linear-to-b from-[#2c2c2c] to-[#333] text-[#8a8a8a]">
                    <button class="w-[53px] h-full flex items-center gap-[3px] pl-[8px] border-r border-[#222]"><span class="size-[6px] bg-[#b39c7c]"></span>Comp 1</button>
                    <button class="w-[54px] h-full flex items-center gap-[3px] pl-[8px]"><span class="size-[6px] bg-[#b39c7c]"></span>Comp 2</button>
                    <button class="w-[52px] h-full flex items-center gap-[3px] pl-[6px] bg-[#424242] border border-b-0 border-[#a87622] text-[#e0e0e0] whitespace-nowrap"><span class="size-[6px] bg-[#b39c7c]"></span>Comp 3 <span>×</span></button>
                    <svg class="ml-auto mr-[12px] w-[9px] h-[5px]"><use href="#panelMenu"/></svg>
                </div>
                <div class="flex-1 min-h-0 flex bg-[#424242] border border-[#a87622]">
                    <div class="w-[462px] shrink-0 flex flex-col">
                        <div class="h-[23px] flex items-center">
                            <div class="w-[70px] pl-[7px] text-[#e0a010]">
                                <button class="block pl-px text-[11px] leading-[10px] font-bold">0:00:00:00</button>
                                <div class="text-[7px] leading-[8px] whitespace-nowrap">00000 (24.00 fps)</div>
                            </div>
                            <div class="relative w-[245px] h-[11px]">
                                <input type="text" aria-label="Search timeline" class="block size-full pl-[16px] bg-[#a0a0a0] border border-[#222]">
                                <svg class="absolute left-[1px] top-[1px] w-[15px] h-[9px]"><use href="#lens"/></svg>
                            </div>
                            <svg class="ml-[8px] w-[16px] h-[9px]" viewBox="0 0 16 9"><path d="M0 1.500h4M0 4h4M0 6.500h4M10 1.500h4M10 4h4M10 6.500h4" stroke="#ccc" stroke-dasharray="2 .7" stroke-width="1.300"/><path d="M5 4h5M5 2v4M9.500 2v4" stroke="#ccc" stroke-width=".8"/><path d="M14 9h2V7z" fill="#ddd"/></svg>
                            <svg class="ml-[7px] w-[12px] h-[11px]" viewBox="0 0 12 11"><path d="m7 3 4 1.500v4L7.500 10.500 4 8.500v-4z" fill="#c4c4c4"/><path d="M4 4.500 7.500 6 11 4.500M7.500 6v4.500" stroke="#777" fill="none" stroke-width=".6"/><path d="M2 .5v3M.5 2h3M1 1l2 2M3 1 1 3" stroke="#ddd" stroke-width=".6"/></svg>
                            <svg class="ml-[10px] w-[12px] h-[9px]" viewBox="0 0 12 9"><circle cx="6" cy="3" r="2.700" fill="#ccc"/><path d="M0 5h12v4H0z" fill="#aaa"/><path d="M4 4v2h4V4" fill="#ddd"/></svg>
                            <svg class="ml-[5px] w-[12px] h-[10px]" viewBox="0 0 12 10"><path d="M4 0h8v6H4z" fill="#aaa"/><path d="M2 2h8v6H2z" fill="#999" stroke="#ddd" stroke-width=".6"/><path d="M0 4h8v6H0z" fill="#bbb" stroke="#666" stroke-width=".6"/></svg>
                            <svg class="ml-[4px] w-[12px] h-[11px]" viewBox="0 0 12 11"><circle cx="8" cy="4" r="3.500" fill="#888"/><circle cx="6" cy="5.500" r="3.500" fill="#a8a8a8"/><circle cx="4" cy="7" r="3.500" fill="#ccc"/></svg>
                            <svg class="ml-[9px] w-[13px] h-[10px]" viewBox="0 0 13 10"><ellipse cx="7.500" cy="4" rx="5" ry="4" fill="#c4c4c4"/><circle cx="7.500" cy="4" r="1.800" fill="#fff" stroke="#555" stroke-width=".8"/><circle cx="3" cy="7.500" r="1.300" fill="#ccc"/><circle cx="1" cy="9" r=".8" fill="#ccc"/></svg>
                            <svg class="ml-[5px] w-[13px] h-[10px]" viewBox="0 0 13 10"><path d="M.5.5h11v8H.5zM0 3.500h12M0 6h12" fill="none" stroke="#aaa" stroke-width=".7"/><path d="m1 1 3 2 3 4 5 1" fill="none" stroke="#ddd" stroke-width="1.300"/></svg>
                        </div>
                        <div class="h-[12px] shrink-0 flex items-center bg-linear-to-b from-[#4a4a4a] to-[#383838] border-y border-[#222] text-[7px] text-[#cacaca]">
                            <svg class="ml-[4px] w-[8px] h-[7px]" viewBox="0 0 8 7"><path d="M0 3.500q4-5 8 0-4 4-8 0z" fill="#ccc"/><circle cx="4" cy="3.500" r="1.300" fill="#222"/></svg>
                            <svg class="ml-px w-[9px] h-[7px]" viewBox="0 0 9 7"><path d="M0 2h2l3-2v7L2 5H0z" fill="#ccc"/><path d="M6 2q1 1.500 0 3M7.300 1q1.500 2.500 0 5" stroke="#bbb" fill="none" stroke-width=".8"/></svg>
                            <svg class="ml-[3px] w-[4px] h-[4px] text-[#ccc]"><use href="#dot"/></svg>
                            <svg class="ml-[5px] mr-[6px] w-[6px] h-[7px]" viewBox="0 0 6 7"><path d="M0 3h6v4H0z" fill="#ccc"/><path d="M1.200 3V1.500Q3-.5 4.800 1.500V3" fill="none" stroke="#ccc"/></svg>
                            <span class="w-px h-[7px] bg-[#222]"></span>
                            <svg class="ml-[6px] w-[10px] h-[7px]"><use href="#tag"/></svg>
                            <span class="ml-[5px]">#</span>
                            <span class="ml-[12px] pl-[3px] border-l border-[#222] leading-[7px]">Source Name</span>
                            <div class="ml-auto w-[173px] flex items-center border-l border-[#222]">
                                <svg class="ml-[3px] w-[7px] h-[7px]" viewBox="0 0 7 7"><path d="M0 4h7M3.500 1v4" stroke="#bbb" stroke-width=".7"/><circle cx="3.500" cy="3.500" r="1.500" fill="#ccc"/></svg>
                                <svg class="ml-[3px] w-[7px] h-[7px]" viewBox="0 0 7 7"><circle cx="3.500" cy="3.500" r="1.600" fill="none" stroke="#ccc"/><path d="M3.500 0v7M0 3.500h7M1 1l5 5M6 1 1 6" stroke="#ccc" stroke-width=".5"/></svg>
                                <svg class="ml-[3px] w-[6px] h-[7px]" viewBox="0 0 6 7"><path d="m0 0 6 7" stroke="#ccc"/></svg>
                                <span class="ml-[4px] font-['Liberation_Serif',serif] italic text-[8px] leading-[8px]">fx</span>
                                <svg class="ml-[3px] w-[7px] h-[8px]" viewBox="0 0 7 8"><path d="M0 0h7v8H0z" fill="#ccc"/><path d="M2 1h3v2.500H2zM2 4.500h3V7H2z" fill="#444"/></svg>
                                <svg class="ml-[2px] w-[8px] h-[8px]" viewBox="0 0 12 11"><circle cx="8" cy="4" r="3.500" fill="#999"/><circle cx="6" cy="5.500" r="3.500" fill="#ccc" stroke="#555"/><circle cx="4" cy="7" r="3.500" fill="#bbb"/></svg>
                                <svg class="ml-[2px] w-[8px] h-[8px]" viewBox="0 0 8 8"><circle cx="4" cy="4" r="3.500" fill="#222" stroke="#ccc" stroke-width=".8"/><path d="M6.500 1.500a3.500 3.500 0 0 1-5 5z" fill="#ddd"/></svg>
                                <svg class="ml-px w-[8px] h-[8px]" viewBox="0 0 8 8"><path d="m4 0 3.500 1.500v4.500L4 8 .5 6V1.500z" fill="#ccc"/><path d="M.5 1.800 4 3.500l3.500-1.700M4 3.500V8" stroke="#666" fill="none" stroke-width=".7"/></svg>
                                <span class="ml-[8px] pl-[3px] border-l border-[#222] leading-[7px]">Parent</span>
                            </div>
                        </div>
                        <div class="flex-1"></div>
                        <div class="h-[11px] shrink-0 flex items-center border-t border-[#242424]">
                            <svg class="ml-[3px] w-[9px] h-[9px] bg-[#1c1c1c]" viewBox="0 0 9 9"><path d="M1 1h5v5H1z" fill="#bbb"/><path d="m3.500 3 4 1.500V8h-4z" fill="#ccc" stroke="#333" stroke-width=".7"/></svg>
                            <svg class="ml-[3px] w-[9px] h-[9px]" viewBox="0 0 9 9"><circle cx="3.500" cy="3.500" r="2.700" fill="none" stroke="#bbb"/><path d="M3.500 3.500h5v4h-5z" fill="none" stroke="#ccc"/></svg>
                            <svg class="ml-[3px] w-[8px] h-[9px]" viewBox="0 0 8 9"><path d="M3 1H2v2.500L.5 4.500 2 5.500V8h1M5 1h1v2.500l1.500 1L6 5.500V8H5" fill="none" stroke="#ccc" stroke-width="1.100"/></svg>
                            <button class="ml-[255px] w-[84px] h-[10px] text-[7px] leading-[8px] bg-linear-to-b from-[#555] to-[#444] border border-[#2a2a2a] font-bold text-[#c8c8c8] whitespace-nowrap">Toggle Switches / Modes</button>
                        </div>
                    </div>

                    <div class="flex-1 min-w-0 flex flex-col border-l border-[#2a2a2a]">
                        <div class="flex-1 min-h-0 flex">
                            <div class="relative flex-1 flex flex-col">
                                <div class="mt-[3px] h-[6px] mr-[1px] bg-[#858585] border-x-[4px] border-[#c08a10]"></div>
                                <div id="timeLabels" class="h-[14px] ml-[2px] mr-[4px] flex justify-between text-[#a8a8a8]"></div>
                                <div class="h-[11px] mr-[2px] bg-[#757575] border-x-[3px] border-[#b8830f] outline outline-[#222]"></div>
                                <div class="h-px ml-[3px] mr-[4px] mt-px bg-[#14b828]"></div>
                                <div class="flex-1 ml-[3px] mr-[3px] bg-[#525252] border-l border-[#c82418]"></div>
                                <svg class="absolute left-0 top-[11px] w-[8px] h-[26px]" viewBox="0 0 8 26"><path d="M3.500 7v19" stroke="#c82418"/><path d="M.5 1q3-1.500 6.500 0v4.500L3.700 9.500.5 5.500z" fill="#f0b020" stroke="#8a6010" stroke-width=".6"/><path d="M2.300 3.500h3L3.800 6z" fill="#7a5510"/></svg>
                            </div>
                            <div class="w-[11px] flex flex-col items-center bg-[#3a3a3a] border-l border-[#2a2a2a] text-[#6c6c6c]">
                                <svg class="mt-[23px] w-[8px] h-[9px]" viewBox="0 0 8 9"><path d="M0 0h8v6L4 9 0 6z" fill="#a8a8a8"/></svg>
                                <svg class="mt-[5px] w-[9px] h-[8px]" viewBox="0 0 9 8"><circle cx="3.500" cy="3" r="2.500" fill="none" stroke="#ccc"/><path d="M3 3.500h5v3.500H0" fill="none" stroke="#ccc" stroke-width="1.200"/></svg>
                                <svg class="mt-[5px] w-[6px] h-[5px] rotate-180"><use href="#down"/></svg>
                                <svg class="mt-auto mb-[3px] w-[6px] h-[5px]"><use href="#down"/></svg>
                            </div>
                        </div>
                        <div class="h-[11px] shrink-0 flex items-center border-t border-[#242424] text-[#6c6c6c]">
                            <svg class="ml-[2px] w-[6px] h-[3px]" viewBox="0 0 6 3"><path d="m0 3 2-2 1 1 1-1.500L6 3z" fill="#bbb"/></svg>
                            <input type="range" aria-label="Timeline zoom" value="0" class="appearance-none ml-[9px] w-[29px] h-[3px] bg-[#1c1c1c] rounded-full [&::-webkit-slider-thumb]:appearance-none [&::-webkit-slider-thumb]:size-[6px] [&::-webkit-slider-thumb]:rounded-full [&::-webkit-slider-thumb]:bg-[#2c2c2c]">
                            <svg class="ml-[7px] w-[10px] h-[5px]" viewBox="0 0 10 5"><path d="m0 5 2.500-4L4 2l2-2 1.500 1.500L10 5z" fill="#ccc"/></svg>
                            <div class="ml-[4px] h-[10px] flex-1 mr-[11px] pl-[2px] pr-px flex items-center justify-between border-l border-[#242424] bg-[#3c3c3c]">
                                <svg class="w-[5px] h-[6px] rotate-180"><use href="#right"/></svg>
                                <svg class="w-[5px] h-[6px]"><use href="#right"/></svg>
                            </div>
                        </div>
                    </div>
                </div>
            </section>

            <!-- character panel -->
            <section class="w-[160px] shrink-0 flex flex-col">
                <div class="h-[4px]"><div class="w-[125px] h-[3px] bg-[#484848]"></div></div>
                <div class="h-[12px] shrink-0 flex items-center bg-linear-to-b from-[#2c2c2c] to-[#333] text-[#8a8a8a]">
                    <button class="h-full w-[51px] pr-[2px] border-r border-[#222]">Paragraph</button>
                    <button class="h-full w-[50px] pl-[3px] bg-[#424242] text-[#e0e0e0] whitespace-nowrap">Character ×</button>
                    <button class="h-full w-[32px] border-r border-[#222]">Align</button>
                    <svg class="ml-auto mr-[12px] w-[9px] h-[5px]"><use href="#panelMenu"/></svg>
                </div>
                <div class="flex-1 bg-[#424242] pl-[3px] pt-[6px]">
                    <div class="w-[126px] flex flex-col">
                        <div class="h-[33px] flex border-b border-[#2a2a2a]">
                            <div class="flex flex-col gap-[4px]">
                                <div class="relative w-[78px] h-[11px]">
                                    <select aria-label="Font family" class="appearance-none block size-full pl-[2px] bg-linear-to-r from-[#a0a0a0] from-85% to-[#424242] to-85% border border-[#222] text-[#111]"><option>Source Sans Pro</option></select>
                                    <svg class="absolute right-[3px] top-[4px] w-[5px] h-[4px]"><use href="#down"/></svg>
                                </div>
                                <div class="relative w-[78px] h-[11px]">
                                    <select aria-label="Font style" class="appearance-none block size-full pl-[2px] bg-linear-to-r from-[#a0a0a0] from-85% to-[#424242] to-85% border border-[#222] text-[#111]"><option>Semibold</option></select>
                                    <svg class="absolute right-[3px] top-[4px] w-[5px] h-[4px]"><use href="#down"/></svg>
                                </div>
                            </div>
                            <svg class="ml-[3px] w-[43px] h-[28px]" viewBox="0 0 43 28"><path d="m1 11 1-2.500L6.500 4 8 5.500 3.500 10z" fill="#888" stroke="#1c1c1c" stroke-width=".6"/><path d="m6 3 3 3M7.500 4 10 1.500" stroke="#ccc" stroke-width="1.800"/><path d="M.5 16h12v5h-12z" fill="#000"/><path d="M.5 21h12v5h-12z" fill="#fff"/><path d="M24 9h18v18H24z" fill="#fff" stroke="#333" stroke-width=".5"/><path d="M29 15h8v7h-8z" fill="#2c2c2c"/><path d="M16 0h19v19H16z" fill="#f6f6f6" stroke="#333"/><path d="M15.500 20.500h6v6h-6z" fill="#fff"/><path d="m15.500 26.500 6-6" stroke="#c41c28" stroke-width="1.300"/><path d="M37 2.500q4 0 3.500 4M38.500.5l-2 2 2 2M38.500 5l2 2 2-2" fill="none" stroke="#ccc"/></svg>
                        </div>
                        <div class="grid grid-cols-[15px_30px_22px_20px_30px_9px] auto-rows-[13px] items-center pb-[3px] border-b border-[#2a2a2a]">
                            <svg class="w-[11px] h-[10px]" viewBox="0 0 11 10"><path d="M3 .5h8v2h-1l-.3-1H7.800V9h1v.7H5.200V9h1V1.500H4.300l-.3 1H3zM0 4.500h4V6h-.6l-.3-.8h-.6v3.600h.5v.5H1v-.5h.5V5.200H.9L.6 6H0z" fill="#c4c4c4"/></svg>
                            <span><button class="text-[#d8980c] border-b border-dotted border-[#a06c10] leading-[8px] font-bold">50</button> px</span>
                            <svg class="w-[5px] h-[5px]"><use href="#down"/></svg>
                            <svg class="w-[9px] h-[12px]" viewBox="0 0 9 12"><path d="m3 5 2-5 2 5M3.700 3.500h2.600M3 11.500l2.500-5.500L8 11.500M4 10h3M1.500 6v5.500M0 10l1.500 1.500L3 10" fill="none" stroke="#c4c4c4" stroke-width=".9"/></svg>
                            <span><button class="text-[#d8980c] border-b border-dotted border-[#a06c10] leading-[8px] font-bold">77</button> px</span>
                            <svg class="w-[5px] h-[5px]"><use href="#down"/></svg>

                            <svg class="w-[11px] h-[9px]" viewBox="0 0 11 9"><path d="m0 8 2-5 2 5M.7 6.500h2.600M3.500 3l2 5 2-5M7 3l1.500 5L10.500 3M4.500 1 5.500 0l1 1" fill="none" stroke="#b4b4b4" stroke-width=".9"/></svg>
                            <span class="text-[#7c7c7c]">Optical</span>
                            <svg class="w-[5px] h-[5px]"><use href="#down"/></svg>
                            <svg class="w-[11px] h-[9px]" viewBox="0 0 11 9"><path d="M0 0h11v6H0z" fill="#aaa"/><path d="m1 5.500 2-5 2 5M1.700 4h2.600M6 .5l2 5 2-5" fill="none" stroke="#222" stroke-width=".9"/><path d="M1 8h9M2.500 7 1 8l1.500 1M8.500 7 10 8 8.500 9" fill="none" stroke="#ccc" stroke-width=".7"/></svg>
                            <span><button class="text-[#d8980c] border-b border-dotted border-[#a06c10] leading-[8px] font-bold">10</button></span>
                            <svg class="w-[5px] h-[5px]"><use href="#down"/></svg>
                        </div>
                        <div class="h-[19px] flex items-center border-b border-[#2a2a2a]">
                            <svg class="ml-px w-[9px] h-[8px]" viewBox="0 0 9 8"><path d="M0 .8h9" stroke="#ccc" stroke-width=".8"/><path d="M0 3.500h9" stroke="#ccc"/><path d="M0 7h9" stroke="#ccc" stroke-width="1.500"/></svg>
                            <span class="ml-[5px] w-[30px]"><button class="text-[#d8980c] border-b border-dotted border-[#a06c10] leading-[8px] font-bold">3</button> px</span>
                            <svg class="w-[5px] h-[5px]"><use href="#down"/></svg>
                            <div class="relative ml-auto w-[73px] h-[11px]">
                                <select aria-label="Stroke order" class="appearance-none block size-full pl-[3px] bg-linear-to-b from-[#4a4a4a] to-[#3c3c3c] border border-[#262626]"><option>Fill Over Stroke</option></select>
                                <svg class="absolute right-[3px] top-[4px] w-[5px] h-[4px]"><use href="#down"/></svg>
                            </div>
                        </div>
                        <div class="grid grid-cols-[15px_30px_22px_20px_30px_9px] auto-rows-[13px] items-center pt-[3px] pb-[4px] border-b border-[#2a2a2a]">
                            <svg class="w-[11px] h-[10px]" viewBox="0 0 11 10"><path d="M1.500 1v8M0 2.500 1.500.8 3 2.500M0 7.500l1.500 1.700L3 7.500" fill="none" stroke="#c4c4c4" stroke-width=".9"/><path d="M4 1h7v2h-.8l-.3-1H8.200v6.500h1V9H5.800v-.5h1V2H5.100l-.3 1H4z" fill="#c4c4c4"/></svg>
                            <span><button class="text-[#d8980c] border-b border-dotted border-[#a06c10] leading-[8px] font-bold">100</button> %</span>
                            <svg class="w-[5px] h-[5px]"><use href="#down"/></svg>
                            <svg class="w-[11px] h-[10px]" viewBox="0 0 11 10"><path d="M1 0h9v2h-.8l-.3-1H6.500v5.500h1V7H3.500v-.5h1V1H2.100l-.3 1H1z" fill="#c4c4c4"/><path d="M0 9h11M1.500 8 0 9l1.500 1M9.500 8 11 9l-1.500 1" fill="none" stroke="#ccc" stroke-width=".7"/></svg>
                            <span><button class="text-[#d8980c] border-b border-dotted border-[#a06c10] leading-[8px] font-bold">100</button> %</span>
                            <svg class="w-[5px] h-[5px]"><use href="#down"/></svg>

                            <svg class="w-[10px] h-[9px]" viewBox="0 0 10 9"><path d="m0 8 2-5 2 5M.7 6.500h2.600M5.500 4 7 .5 8.500 4M7 5v4M5.800 7.500 7 9l1.200-1.500" fill="none" stroke="#b4b4b4" stroke-width=".8"/></svg>
                            <span><button class="text-[#d8980c] border-b border-dotted border-[#a06c10] leading-[8px] font-bold">30</button> px</span>
                            <svg class="w-[5px] h-[5px]"><use href="#down"/></svg>
                            <svg class="w-[10px] h-[9px]" viewBox="0 0 10 9"><path d="M1 0v6M9 0v6" stroke="#888" stroke-dasharray="1 1"/><path d="M3 1.500h4M5 0v6M3 3.500h4L3.500 6M0 8h10" fill="none" stroke="#aaa" stroke-width=".8"/></svg>
                            <span><button class="text-[#d8980c] border-b border-dotted border-[#a06c10] leading-[8px] font-bold">0</button> %</span>
                            <svg class="w-[5px] h-[5px]"><use href="#down"/></svg>
                        </div>
                        <div class="mt-[4px] flex pl-[11px] font-['Liberation_Serif',serif] text-[9px] leading-[11px] font-bold text-[#c8c8c8]">
                            <button class="w-[17px]">T</button>
                            <button class="w-[17px] italic">T</button>
                            <button class="w-[19px]">TT</button>
                            <button class="w-[15px] h-[12px] bg-[#2a2a2a] border border-[#161616] leading-[10px]">T<span class="text-[6px]">T</span></button>
                            <button class="ml-[3px] w-[17px]">T<span class="text-[6px] align-top leading-[6px]">1</span></button>
                            <button class="w-[16px]">T<span class="text-[6px]">1</span></button>
                        </div>
                    </div>
                </div>
            </section>
        </div>
    </main>

    <script>
        // effect categories
        const effects = ['* Animation Presets', '3D Channel', 'Audio', 'Blur & Sharpen', 'Channel', 'CINEMA 4D', 'Color Correction', 'Distort', 'Expression Controls', 'Generate', 'Keying', 'Matte', 'Noise & Grain', 'Obsolete'];
        document.getElementById('effectList').innerHTML = effects.map(name =>
            `<li class="h-[11px] flex items-center gap-[2px] pl-[3px] border-b border-[#3a3a3a] whitespace-nowrap"><svg class="w-[5px] h-[6px] text-[#a0a0a0]"><use href="#right"/></svg>${name.replace('&', '&amp;')}</li>`).join('');

        // timeline labels, one every five minutes
        let labels = '';
        for (let m = 0; m <= 60; m += 5) {
            const text = m === 0 ? '00m' : m === 60 ? '1:00' : String(m).padStart(2, '0') + 'm';
            const pos = m === 0 ? '-left-[3px]' : m === 60 ? 'right-0' : 'left-1/2 -translate-x-1/2';
            labels += `<div class="relative w-0 border-l border-[#999] h-[3px] self-end"><span class="absolute bottom-[3px] ${pos}">${text}</span></div>`;
        }
        document.getElementById('timeLabels').innerHTML = labels;

        // viewer rulers, drawn only as far as the viewer reaches
        const view = document.getElementById('viewer').getBoundingClientRect();
        const step = 31.9;
        let ruler = '', ticks = '';
        for (let i = -33; 115 + i * step / 10 < view.width; i++) {
            const x = (115 + i * step / 10).toFixed(1);
            if (x < 10) continue;
            ticks += i % 10 === 0 ? `M${x} 0v10` : `M${x} 7v3`;
            if (i % 10 === 0) ruler += `<text x="${+x + 1.5}" y="6">${Math.abs(i * 10)}</text>`;
        }
        for (let i = 5; -6.4 + i * step / 10 < view.height; i++) {
            const y = (-6.4 + i * step / 10).toFixed(1);
            if (y < 11) continue;
            ticks += i % 10 === 0 ? `M0 ${y}h10` : `M7 ${y}h3`;
            if (i % 10 === 0) String(i * 10).split('').forEach((d, n) => {
                const top = +y + 6 + n * 5;
                if (top < view.height) ruler += `<text x="1" y="${top}">${d}</text>`;
            });
        }
        document.getElementById('ruler').innerHTML = `<path d="${ticks}" stroke="#a0a0a0" stroke-width=".8"/>` + ruler;
    </script>
</body>
</html>
